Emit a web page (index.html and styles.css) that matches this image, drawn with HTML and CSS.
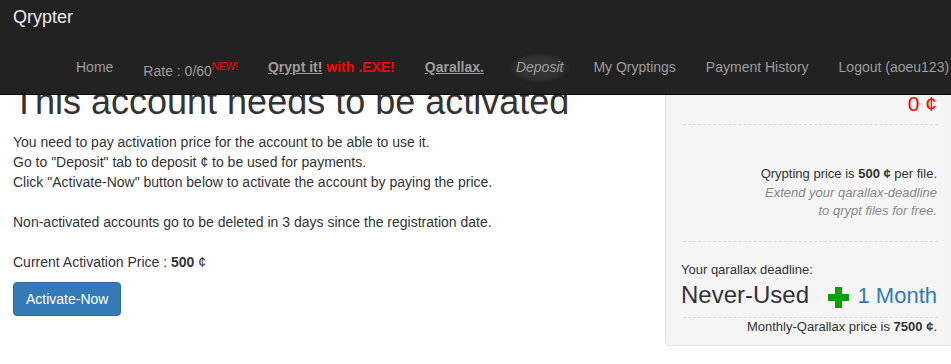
FILE: index.html
```html
<!DOCTYPE html>
<html lang="en">
<head>
<meta charset="utf-8">
<title>Qrypter</title>
<link rel="stylesheet" href="styles.css">
</head>
<body>
<nav class="navbar">
  <div class="brand">Qrypter</div>
  <ul class="nav">
    <li><a href="#">Home</a></li>
    <li><a href="#">Rate : 0/60<sup class="new">NEW!</sup></a></li>
    <li><a href="#" class="bold"><u>Qrypt it!</u> <span class="red">with .EXE!</span></a></li>
    <li><a href="#" class="bold qarallax"><u>Qarallax.</u></a></li>
    <li><a href="#" class="deposit">Deposit</a></li>
    <li><a href="#">My Qryptings</a></li>
    <li><a href="#">Payment History</a></li>
    <li><a href="#">Logout (aoeu123)</a></li>
  </ul>
</nav>

<main class="page">
  <section class="content">
    <h1 class="title">This account needs to be activated</h1>
    <p class="info">You need to pay activation price for the account to be able to use it.<br>Go to "Deposit" tab to deposit ¢ to be used for payments.<br>Click "Activate-Now" button below to activate the account by paying the price.<br><br>Non-activated accounts go to be deleted in 3 days since the registration date.<br><br>Current Activation Price : <b>500</b> ¢</p>
    <button class="btn" type="button">Activate-Now</button>
  </section>

  <aside class="well">
    <div class="balance">0 ¢</div>
    <hr class="dash dash-first">
    <div class="price">
      <div>Qrypting price is <b>500 ¢</b> per file.</div>
      <div class="hint">Extend your qarallax-deadline</div>
      <div class="hint">to qrypt files for free.</div>
    </div>
    <hr class="dash dash-second">
    <div class="label">Your qarallax deadline:</div>
    <div class="deadline">
      <span class="never">Never-Used</span>
      <span class="extend">
        <svg class="plus" width="21" height="21" viewBox="0 0 21 21" aria-hidden="true"><path d="M7 0h7v7h7v7h-7v7H7v-7H0V7h7z" fill="#00a300"/></svg>
        <span class="month">1 Month</span>
      </span>
    </div>
    <hr class="dash dash-third">
    <div class="monthly">Monthly-Qarallax price is <b>7500 ¢</b>.</div>
  </aside>
</main>
</body>
</html>
```

FILE: styles.css
```css
* { box-sizing: border-box; }

html, body {
  margin: 0;
  padding: 0;
  background: #fff;
  overflow: hidden;
}

body {
  font-family: "Liberation Sans", Arial, sans-serif;
  font-size: 14px;
  line-height: 20px;
  color: #333;
  width: 951px;
  height: 364px;
}

/* ---------- navbar ---------- */
.navbar {
  position: fixed;
  top: 0;
  left: 0;
  right: 0;
  height: 95px;
  background: #222;
  border-bottom: 1px solid #080808;
  z-index: 10;
  overflow: hidden;
}

.brand {
  height: 42px;
  padding: 7px 0 0 13px;
  font-size: 18px;
  line-height: 20px;
  color: #ececec;
}

.nav {
  display: flex;
  align-items: flex-start;
  margin: 0;
  padding: 0 0 0 61px;
  list-style: none;
  white-space: nowrap;
}

.nav a {
  display: block;
  padding: 15px;
  line-height: 20px;
  color: #9d9d9d;
  text-decoration: none;
}

.nav .bold { font-weight: bold; }
.nav u { text-decoration: underline; }
.nav .red { color: #f00; }
.nav .qarallax { padding-right: 17px; }

.new {
  font-size: 10px;
  color: #f00;
}

.deposit {
  font-style: italic;
  background: radial-gradient(31px 15px at 50% 52%, rgba(255,255,255,0.09) 0%, rgba(255,255,255,0.07) 70%, rgba(255,255,255,0) 100%);
}

/* ---------- page ---------- */
.page {
  display: grid;
  grid-template-columns: 1fr 286px;
  column-gap: 15px;
  padding-top: 62px;
}

.content {
  padding-left: 13px;
}

.title {
  margin: 20px 0 10px;
  font-size: 36px;
  line-height: 1.1;
  font-weight: 500;
  color: #333;
  white-space: nowrap;
}

.info {
  margin: 0 0 10px;
}

.btn {
  display: inline-block;
  height: 34px;
  padding: 6px 12px;
  font-family: inherit;
  font-size: 14px;
  line-height: 20px;
  color: #fff;
  background: #337ab7;
  border: 1px solid #2e6da4;
  border-radius: 4px;
  cursor: pointer;
}

/* ---------- sidebar well ---------- */
.well {
  align-self: start;
  background: #f5f5f5;
  border: 1px solid #e3e3e3;
  border-right: 0;
  border-radius: 4px 0 0 4px;
  box-shadow: inset 0 1px 1px rgba(0,0,0,0.05);
  padding: 31px 14px 8px 15px;
  font-size: 13px;
  line-height: 18.6px;
  color: #333;
}

.balance {
  text-align: right;
  font-size: 21px;
  line-height: 20px;
  height: 20px;
  color: #f00;
}

.dash {
  height: 0;
  border: 0;
  border-top: 1px dashed #e0e0e0;
  margin: 0 -1px 0 2px;
}

.dash-first { margin-top: 10px; }
.dash-second { margin-top: 20px; }
.dash-third { margin-top: 8px; }

.price {
  margin-top: 40px;
  text-align: right;
}

.hint {
  font-style: italic;
  color: #888;
}

.label {
  margin-top: 19px;
}

.deadline {
  display: flex;
  justify-content: space-between;
  align-items: baseline;
  margin-top: 3px;
  line-height: 26px;
}

.never {
  font-size: 24px;
  color: #333;
}

.extend {
  display: inline-flex;
  align-items: baseline;
}

.plus {
  align-self: center;
  margin-right: 9px;
  position: relative;
  top: 1px;
}

.month {
  font-size: 22px;
  color: #337ab7;
}

.monthly {
  text-align: right;
}
```
